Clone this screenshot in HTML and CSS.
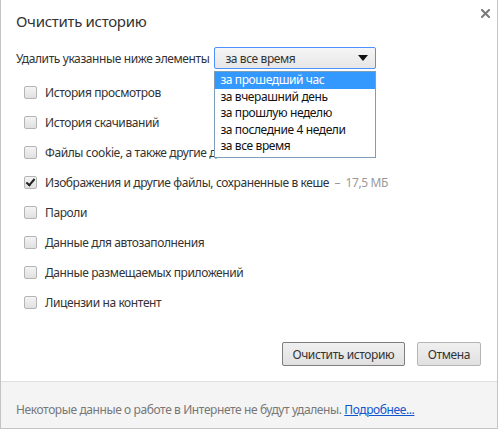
FILE: index.html
```html
<!DOCTYPE html>
<html lang="ru">
<head>
  <meta charset="UTF-8" />
  <title>Очистить историю</title>
  <link rel="stylesheet" href="styles.css">
</head>
<body>

  <div class="dialog">
    <div class="dialog-main">
      <div class="dialog-head">
        <h1 class="dialog-title">Очистить историю</h1>
        <span class="close-btn">
          <svg width="9" height="9" viewBox="0 0 9 9">
            <path d="M1 1 L8 8 M8 1 L1 8" stroke="#7a7a7a" stroke-width="2" stroke-linecap="square" />
          </svg>
        </span>
      </div>

      <div class="period-row">
        <span>Удалить указанные ниже элементы</span>
        <div class="period-select">
          <div class="select-box">
            <span>за все время</span>
            <span class="select-arrow"></span>
          </div>
          <ul class="select-menu">
            <li class="active">за прошедший час</li>
            <li>за вчерашний день</li>
            <li>за прошлую неделю</li>
            <li>за последние 4 недели</li>
            <li>за все время</li>
          </ul>
        </div>
      </div>

      <ul class="check-list">
        <li><span class="check"></span>История просмотров</li>
        <li><span class="check"></span>История скачиваний</li>
        <li><span class="check"></span>Файлы cookie, а также другие данные сайтов и плагинов</li>
        <li><span class="check checked"></span>Изображения и другие файлы, сохраненные в кеше<span class="size">&nbsp; – &nbsp;17,5 МБ</span></li>
        <li><span class="check"></span>Пароли</li>
        <li><span class="check"></span>Данные для автозаполнения</li>
        <li><span class="check"></span>Данные размещаемых приложений</li>
        <li><span class="check"></span>Лицензии на контент</li>
      </ul>

      <div class="actions">
        <button class="btn btn-default">Очистить историю</button>
        <button class="btn">Отмена</button>
      </div>
    </div>

    <div class="dialog-footer">
      <span>Некоторые данные о работе в Интернете не будут удалены. <a href="#">Подробнее...</a></span>
    </div>
  </div>

</body>
</html>
```

FILE: styles.css
```css
body {
  margin: 0;
  font-family: 'Noto Sans', 'Open Sans', sans-serif;
  font-size: 12px;
  letter-spacing: -0.4px;
  color: #333;
  background: #fff;
}

.dialog {
  width: 498px;
  height: 429px;
  box-sizing: border-box;
  border: 1px solid #c4c4c4;
  border-top: none;
  display: flex;
  flex-direction: column;
}

.dialog-main {
  flex: 1;
  padding: 0 15px;
}

.dialog-head {
  display: flex;
  justify-content: space-between;
  align-items: flex-start;
  height: 45px;
  margin-right: -8px;
}

.dialog-title {
  margin: 11px 0 0;
  font-size: 15px;
  font-weight: 400;
  letter-spacing: -0.3px;
  color: #333;
}

.close-btn {
  display: block;
  margin-top: 9px;
  line-height: 0;
}

.period-row {
  display: flex;
  align-items: center;
  height: 26px;
  gap: 5px;
}

.period-select {
  position: relative;
}

.select-box {
  width: 162px;
  height: 22px;
  box-sizing: border-box;
  border: 1px solid #4d90fe;
  border-radius: 2px;
  background: linear-gradient(#f6f6f6, #e6e6e6);
  display: flex;
  align-items: center;
  justify-content: space-between;
  padding: 0 7px 0 10px;
}

.select-arrow {
  width: 0;
  height: 0;
  border-left: 5px solid transparent;
  border-right: 5px solid transparent;
  border-top: 6px solid #111;
}

.select-menu {
  position: absolute;
  top: 24px;
  left: 0;
  width: 162px;
  box-sizing: border-box;
  margin: 0;
  padding: 0 0 2px;
  list-style: none;
  background: #fff;
  border: 1px solid #7f9db9;
  z-index: 2;
}

.select-menu li {
  height: 16.5px;
  line-height: 16px;
  padding-left: 5px;
  color: #111;
}

.select-menu li.active {
  background: #3399ff;
  color: #fff;
}

.check-list {
  list-style: none;
  margin: 6px 0 0;
  padding: 0 0 0 8px;
}

.check-list li {
  display: flex;
  align-items: center;
  height: 30px;
  white-space: nowrap;
  overflow: hidden;
}

.check {
  width: 13px;
  height: 13px;
  box-sizing: border-box;
  border: 1px solid #b4b4b4;
  border-radius: 2px;
  background: linear-gradient(#f4f4f4, #e0e0e0);
  margin-right: 8px;
  flex-shrink: 0;
  position: relative;
}

.check.checked::after {
  content: '';
  position: absolute;
  left: 3px;
  top: 0;
  width: 3px;
  height: 7px;
  border: solid #222;
  border-width: 0 2px 2px 0;
  transform: rotate(40deg);
}

.size {
  color: #999;
  white-space: pre;
}

.actions {
  display: flex;
  justify-content: flex-end;
  gap: 12px;
  margin: 25px 1px 0 0;
}

.btn {
  height: 24px;
  padding: 0 10px;
  font-family: inherit;
  font-size: 12px;
  letter-spacing: -0.4px;
  white-space: nowrap;
  color: #333;
  border: 1px solid #b5b5b5;
  border-radius: 2px;
  background: linear-gradient(#f0f0f0, #e0e0e0);
}

.btn-default {
  border-color: #7e7e7e;
  width: 123px;
  padding: 0;
}

.dialog-footer {
  height: 47px;
  box-sizing: border-box;
  border-top: 1px solid #e0e0e0;
  background: #f4f4f4;
  color: #777;
  padding: 19px 15px 0;
}

.dialog-footer a {
  color: #1155cc;
}
```
